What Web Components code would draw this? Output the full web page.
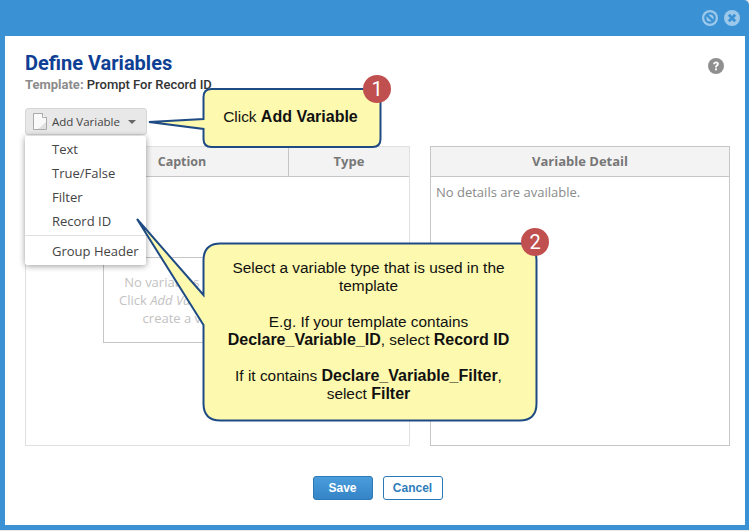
<!DOCTYPE html>
<html>
<head>
<meta charset="utf-8">
<title>Define Variables</title>
<style>
  html, body { margin: 0; padding: 0; background: #e9e9e9; }
  body { width: 749px; height: 531px; overflow: hidden; font-family: "Open Sans", sans-serif; }
</style>
</head>
<body>
<var-dialog>
  <var-header slot="header" title="Define Variables" template="Prompt For Record ID"></var-header>
  <add-variable slot="toolbar"></add-variable>
  <var-panel slot="left" class="left">
    <var-columns slot="head"></var-columns>
    <empty-note>
      No variables have been added.<br>
      Click <i>Add Variable</i> in the menu to<br>
      create a variable for this.
    </empty-note>
  </var-panel>
  <var-panel slot="right" heading="Variable Detail">
    <p style="margin:0;padding:6px 5px;font-size:13px;line-height:18px;color:#8a8a8a">No details are available.</p>
  </var-panel>
  <var-button slot="footer" kind="primary">Save</var-button>
  <var-button slot="footer">Cancel</var-button>

  <var-callout slot="over" num="1" style="left:149px;top:75px;width:245px;height:75px"
    box="54.5,14,177,58" tail="0,47 54.5,44 54.5,54" pad="53,13,177,58">
    Click <b>Add Variable</b>
  </var-callout>
  <var-callout slot="over" num="2" style="left:135px;top:228px;width:420px;height:196px"
    box="68.5,15.5,333,177" tail="2,-9 68.5,67 68.5,97" pad="67,14,333,177">
    Select a variable type that is used in the<br>template<br><br>
    E.g. If your template contains<br><b>Declare_Variable_ID</b>, select <b>Record ID</b><br><br>
    If it contains <b>Declare_Variable_Filter</b>,<br>select <b>Filter</b>
  </var-callout>
</var-dialog>

<script>
  class VarDialog extends HTMLElement {
    constructor() {
      super();
      this.attachShadow({ mode: 'open' });
      this.shadowRoot.innerHTML = `
      <style>
        :host { display: flex; flex-direction: column; position: relative; box-sizing: border-box;
          width: 749px; height: 530px; background: #3a92d4; border-radius: 0 5px 0 0;
          padding: 0 4px 5px 5px; color: #333; }
        .bar { height: 36px; flex: none; display: flex; justify-content: flex-end; align-items: center;
          gap: 6px; padding: 0 5px 0 0; }
        .bar svg { width: 16px; height: 16px; display: block; }
        .body { flex: 1; background: #fff; display: flex; flex-direction: column; padding: 14px 15px 0 20px;
          position: relative; }
        .help { position: absolute; right: 21px; top: 22px; width: 16px; height: 16px; }
        .panels { display: flex; gap: 20px; margin-top: 11px; height: 300px; }
        .panels ::slotted([slot=left]) { width: 385px; }
        .panels ::slotted([slot=right]) { width: 300px; }
        .foot { display: flex; justify-content: center; gap: 10px; margin-top: 30px; }
      </style>
      <div class="bar">
        <svg viewBox="0 0 16 16"><circle cx="8" cy="8" r="8" fill="#9cc8ea"/><circle cx="8" cy="8" r="4.7" fill="none" stroke="#3a92d4" stroke-width="2.2"/><path d="M4.6 4.6l6.8 6.8" stroke="#3a92d4" stroke-width="2.4"/></svg>
        <svg viewBox="0 0 16 16"><circle cx="8" cy="8" r="8" fill="#9cc8ea"/><path d="M4.8 4.8l6.4 6.4M11.2 4.8l-6.4 6.4" stroke="#3a92d4" stroke-width="2.8"/></svg>
      </div>
      <div class="body">
        <svg class="help" viewBox="0 0 16 16"><circle cx="8" cy="8" r="8" fill="#8f8f8f"/><path d="M5.2 6.2c0-1.7 1.2-2.6 2.9-2.6 1.6 0 2.8.9 2.8 2.3 0 2-2.1 1.9-2.1 3.5H7c0-2.4 1.9-2.4 1.9-3.4 0-.5-.4-.8-.9-.8-.6 0-1 .4-1 1z" fill="#fff"/><rect x="7" y="10.4" width="1.9" height="1.9" fill="#fff"/></svg>
        <slot name="header"></slot>
        <slot name="toolbar"></slot>
        <div class="panels"><slot name="left"></slot><slot name="right"></slot></div>
        <div class="foot"><slot name="footer"></slot></div>
      </div>
      <slot name="over"></slot>`;
    }
  }

  class VarHeader extends HTMLElement {
    constructor() {
      super();
      this.attachShadow({ mode: 'open' });
      this.shadowRoot.innerHTML = `
      <style>
        :host { display: block; height: 58px; }
        h1 { margin: 0; font: 700 20px/26px Roboto, sans-serif; color: #0e3f94; }
        p { margin: 1px 0 0; font: 500 13px/16px Roboto, sans-serif; color: #333; }
        span { color: #8c8c8c; font-weight: 700; }
      </style>
      <h1>${this.getAttribute('title')}</h1>
      <p><span>Template:</span> ${this.getAttribute('template')}</p>`;
    }
  }

  class AddVariable extends HTMLElement {
    constructor() {
      super();
      this.attachShadow({ mode: 'open' });
      const items = ['Text', 'True/False', 'Filter', 'Record ID'];
      this.shadowRoot.innerHTML = `
      <style>
        :host { display: block; position: relative; width: 122px; height: 27px; z-index: 2; }
        .btn { box-sizing: border-box; width: 122px; height: 27px; display: flex; align-items: center;
          background: #e8e8e8; border: 1px solid #d6d6d6; border-radius: 3px; padding-left: 7px;
          font: 400 11.5px "Open Sans", sans-serif; color: #444; }
        .btn svg { width: 14px; height: 17px; flex: none; margin-right: 5px; }
        .caret { width: 0; height: 0; border: 4px solid transparent; border-top-color: #666; border-bottom: 0; margin-left: 8px; }
        .menu { position: absolute; left: 0; top: 28px; width: 121px; background: #fff; border-radius: 2px;
          box-shadow: 0 1px 6px rgba(0,0,0,.4); font: 400 13px/24px "Open Sans", sans-serif; color: #444;
          padding: 1px 0 2px; }
        .menu div { padding-left: 27px; white-space: nowrap; }
        hr { border: 0; border-top: 1px solid #e0e0e0; margin: 2px 0 3px; }
      </style>
      <div class="btn">
        <svg viewBox="0 0 14 17"><path d="M.5.5h9l4 4v12H.5z" fill="#fafafa" stroke="#aaa"/><path d="M9.5.5v4h4" fill="#fff" stroke="#aaa"/><path d="M13 9v7H5z" fill="#e0e0e0"/></svg>
        Add Variable<span class="caret"></span>
      </div>
      <div class="menu">
        ${items.map(t => `<div>${t}</div>`).join('')}
        <hr>
        <div>Group Header</div>
      </div>`;
    }
  }

  class VarPanel extends HTMLElement {
    constructor() {
      super();
      this.attachShadow({ mode: 'open' });
      const heading = this.getAttribute('heading');
      const isRight = !!heading;
      this.shadowRoot.innerHTML = `
      <style>
        :host { display: flex; flex-direction: column; box-sizing: border-box; height: 300px;
          border: 1px solid ${isRight ? '#c6c6c6' : '#e0e0e0'}; background: #fff; }
        .head { height: 30px; box-sizing: border-box; flex: none; background: #f3f3f3; border-bottom: 1px solid #c6c6c6;
          font: 700 13px/29px "Open Sans", sans-serif; color: #777; text-align: center; display: block; }
        .main { flex: 1; display: flex; flex-direction: column; }
      </style>
      <div class="head">${heading || '<slot name="head"></slot>'}</div>
      <div class="main"><slot></slot></div>`;
    }
  }

  class VarColumns extends HTMLElement {
    constructor() {
      super();
      this.attachShadow({ mode: 'open' });
      this.shadowRoot.innerHTML = `
      <style>
        :host { display: grid; grid-template-columns: 263px 1fr; height: 29px; }
        div { text-align: center; }
        .cap { border-right: 1px solid #c6c6c6; padding-left: 50px; font-size: 12.5px; }
      </style>
      <div class="cap">Caption</div><div>Type</div>`;
    }
  }

  class EmptyNote extends HTMLElement {
    constructor() {
      super();
      this.attachShadow({ mode: 'open' });
      this.shadowRoot.innerHTML = `
      <style>
        :host { display: block; box-sizing: border-box; width: 229px; height: 86px; margin: 80px 0 0 77px;
          border: 1px solid #c6c6c6; text-align: center; font: 400 13px/18px "Open Sans", sans-serif;
          color: #c2c2c2; padding-top: 15px; white-space: nowrap; }
      </style>
      <slot></slot>`;
    }
  }

  class VarButton extends HTMLElement {
    constructor() {
      super();
      this.attachShadow({ mode: 'open' });
      const primary = this.getAttribute('kind') === 'primary';
      this.shadowRoot.innerHTML = `
      <style>
        :host { display: flex; align-items: center; justify-content: center; box-sizing: border-box;
          width: 60px; height: 24px; border-radius: 3px; border: 1px solid #2a79b8;
          font: 700 12px "Liberation Sans", sans-serif;
          ${primary ? 'background: linear-gradient(#4a9cdb, #3585c6); color: #fff;' : 'background: #fff; color: #2f7dbb;'} }
      </style>
      <slot></slot>`;
    }
  }

  // yellow speech bubble, box and tail given in its own coordinates
  class VarCallout extends HTMLElement {
    constructor() {
      super();
      this.attachShadow({ mode: 'open' });
      const [x, y, w, h] = this.getAttribute('box').split(',').map(Number);
      const [p1, p2, p3] = this.getAttribute('tail').split(' ');
      const [px, py, pw, ph] = this.getAttribute('pad').split(',').map(Number);
      const num = this.getAttribute('num');
      const r = num === '1' ? 8 : 17;
      const [, y2] = p2.split(',').map(Number);
      const [, y3] = p3.split(',').map(Number);
      const right = x + w, bottom = y + h;
      const d = `M${x + r} ${y}H${right - r}Q${right} ${y} ${right} ${y + r}V${bottom - r}Q${right} ${bottom} ${right - r} ${bottom}H${x + r}Q${x} ${bottom} ${x} ${bottom - r}V${y3}L${p1.replace(',', ' ')}L${x} ${y2}V${y + r}Q${x} ${y} ${x + r} ${y}Z`;
      this.shadowRoot.innerHTML = `
      <style>
        :host { display: block; position: absolute; z-index: 5; }
        svg { position: absolute; left: 0; top: 0; overflow: visible; }
        .text { position: absolute; left: ${px}px; top: ${py}px; width: ${pw}px; height: ${ph}px; display: flex;
          align-items: center; justify-content: center; text-align: center;
          font: 400 15.4px/18px "Liberation Sans", sans-serif; color: #111; }
        ::slotted(b) { font-size: 16px; }
        .num { position: absolute; right: ${num === '1' ? 3 : 6}px; top: 0; width: 28px; height: 28px; border-radius: 50%;
          background: #c0504f; color: #fff; font: 400 20px/28px Roboto, sans-serif; text-align: center; }
      </style>
      <svg width="${parseInt(this.style.width)}" height="${parseInt(this.style.height)}">
        <path d="${d}" fill="#fdf9ae" stroke="#1f4b85" stroke-width="2"/>
      </svg>
      <div class="text"><div><slot></slot></div></div>
      <div class="num">${num}</div>`;
    }
  }

  customElements.define('var-dialog', VarDialog);
  customElements.define('var-header', VarHeader);
  customElements.define('add-variable', AddVariable);
  customElements.define('var-panel', VarPanel);
  customElements.define('var-columns', VarColumns);
  customElements.define('empty-note', EmptyNote);
  customElements.define('var-button', VarButton);
  customElements.define('var-callout', VarCallout);
</script>
</body>
</html>
